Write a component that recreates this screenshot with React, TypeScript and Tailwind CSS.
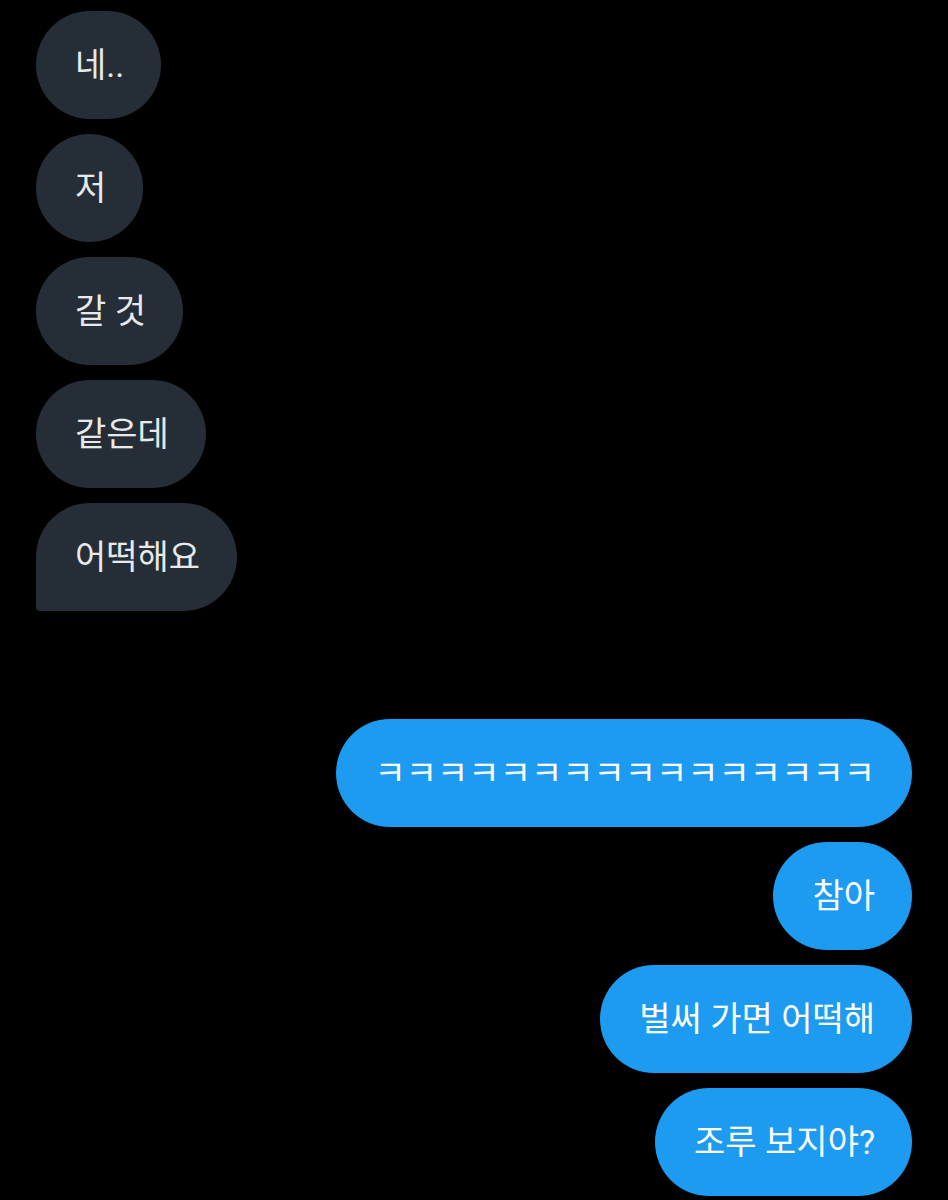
const received = ['네..', '저', '갈 것', '같은데', '어떡해요'];
const sent = ['ㅋㅋㅋㅋㅋㅋㅋㅋㅋㅋㅋㅋㅋㅋㅋㅋ', '참아', '벌써 가면 어떡해', '조루 보지야?'];

export default function App() {
  return (
    <div
      className="min-h-[1200px] w-full bg-black px-[36px] pt-[11px]"
      style={{ fontFamily: 'Roboto, "Noto Sans CJK KR", sans-serif' }}
    >
      <div className="flex flex-col items-start gap-[15px]">
        {received.map((text, i) => (
          <div
            key={i}
            className={`flex h-[108px] items-center whitespace-nowrap rounded-[54px] bg-[#252e36] pl-[39px] pr-[37px] text-[34px] text-[#e7e9ea] ${
              i === received.length - 1 ? 'rounded-bl-[4px]' : ''
            }`}
          >
            {text}
          </div>
        ))}
      </div>

      <div className="mt-[108px] flex flex-col items-end gap-[15px]">
        {sent.map((text, i) => (
          <div
            key={i}
            className="flex h-[108px] items-center whitespace-nowrap rounded-[54px] bg-[#1d9bf0] pl-[39px] pr-[37px] text-[34px] text-white"
          >
            {text}
          </div>
        ))}
      </div>
    </div>
  );
}
